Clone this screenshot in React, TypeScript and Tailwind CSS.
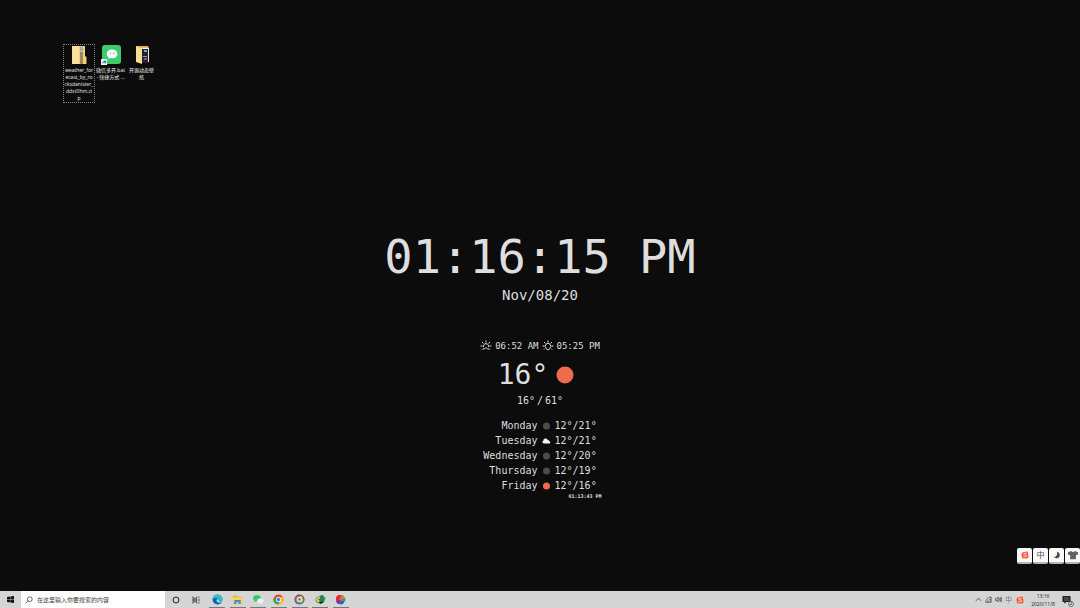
import React from 'react';

type Weather = 'haze' | 'cloud' | 'clear';

type Forecast = {
  day: string;
  weather: Weather;
  range: string;
};

const FORECAST: Forecast[] = [
  { day: 'Monday', weather: 'haze', range: '12°/21°' },
  { day: 'Tuesday', weather: 'cloud', range: '12°/21°' },
  { day: 'Wednesday', weather: 'haze', range: '12°/20°' },
  { day: 'Thursday', weather: 'haze', range: '12°/19°' },
  { day: 'Friday', weather: 'clear', range: '12°/16°' },
];

function WeatherIcon({ weather }: { weather: Weather }) {
  if (weather === 'cloud') {
    return (
      <svg viewBox="0 0 9 9" className="size-[9px]" fill="#f2f2f2" aria-hidden="true">
        <path d="M1.8 7.5A1.4 1.4 0 0 1 1.3 4.8a2.2 2.2 0 0 1 4.2-1 1.9 1.9 0 0 1 1.6 1.2 1.3 1.3 0 0 1 .3 2.5z" />
      </svg>
    );
  }
  return (
    <svg viewBox="0 0 9 9" className="size-[9px]" aria-hidden="true">
      <circle cx="4.5" cy="5" r="3.5" fill={weather === 'clear' ? '#ee6c4d' : '#4b4b4d'} />
    </svg>
  );
}

function SunIcon({ setting }: { setting?: boolean }) {
  return (
    <svg viewBox="0 0 24 24" className="size-3" fill="none" stroke="#dedede" strokeWidth="2" aria-hidden="true">
      {setting ? (
        <>
          <path d="M8.5 16.5a5.5 5.5 0 1 1 7 0" />
          <path d="m8 17 4 3 4-3" />
        </>
      ) : (
        <>
          <path d="M7 14a5.2 5.2 0 1 1 10 0" />
          <path d="M6 18h3l3-3 3 3h3" />
        </>
      )}
      <path d="M12 1v4M4 4l3 3M20 4l-3 3M1 12h4M19 12h4M4 19l2-2M20 19l-2-2" />
    </svg>
  );
}

function ZipIcon() {
  return (
    <svg viewBox="0 0 20 20" className="size-5" aria-hidden="true">
      <path d="M3 1h13v10l1.5 1v7H3z" fill="#f3d277" />
      <path d="M3 1h7v18H3z" fill="#f9dfa0" />
      <path d="M11 1h3v18h-3z" fill="#9c8a5c" />
      <path d="M11.5 1h2v6h-2z" fill="#d9e0e4" />
      <path d="M11.5 3h2M11.5 5h2" stroke="#59686c" strokeWidth=".8" />
    </svg>
  );
}

function WeChatShortcutIcon() {
  return (
    <svg viewBox="0 0 20 20" className="size-5" aria-hidden="true">
      <rect x="1" width="19" height="19" rx="3" fill="#40ca70" />
      <path d="M11 4.5c-3 0-5.3 1.9-5.3 4.4 0 1.4.8 2.6 2 3.4l-.4 1.8 2.1-1c3.8 1 7-1.2 7-4.2 0-2.5-2.3-4.4-5.4-4.4z" fill="#fff" />
      <circle cx="9.3" cy="8.3" r=".7" fill="#40ca70" />
      <circle cx="12.8" cy="8.3" r=".7" fill="#40ca70" />
      <path d="M0 14h6v6H0z" fill="#f3f5f7" />
      <path d="M1.2 19c0-2 1-3 2.5-3v-1.2L5.5 17l-1.8 1.8v-1.2c-1 0-1.8.3-2.5 1.4z" fill="#2569b4" />
    </svg>
  );
}

function FolderIcon() {
  return (
    <svg viewBox="0 0 20 20" className="size-5" aria-hidden="true">
      <path d="M4 1h12l1 2v14H4z" fill="#e3b957" />
      <path d="M8 3h9v14H8z" fill="#ececec" />
      <path d="M10 4h6v14h-6z" fill="#202433" />
      <path d="M12 5h3v2h-3zM11 11h4v1h-4z" fill="#8b9fc4" />
      <path d="M12 13h3v2h-3z" fill="#a94d58" />
      <path d="m4 1 6 3v15l-6-2z" fill="#f9dc91" />
    </svg>
  );
}

function SogouIcon({ className }: { className: string }) {
  return (
    <svg viewBox="0 0 12 12" className={className} aria-hidden="true">
      <path d="M3 1.8 10 .6l1.4 8.6L8.8 11.4 1.6 11 .6 4z" fill="#f45129" />
      <path d="M9 3.7c-2-.9-5.4-.6-5.4.9 0 1.7 5.2.9 5.2 2.7 0 1.6-3.4 1.8-5.6.8" fill="none" stroke="#fff" strokeWidth="1.1" />
    </svg>
  );
}

function MoonIcon() {
  return (
    <svg viewBox="0 0 12 12" className="size-2" fill="#46464b" aria-hidden="true">
      <path d="M5.5 1A5 5 0 1 1 1 8.8C5.2 9.2 7.6 5 5.5 1z" />
    </svg>
  );
}

function ShirtIcon() {
  return (
    <svg viewBox="0 0 12 12" className="size-2.5" fill="#65645b" aria-hidden="true">
      <path d="M3.7 1.2c1.2 1.4 3.4 1.4 4.6 0L12 2.8v3L9.5 6v5h-7V6L0 5.8v-3z" />
    </svg>
  );
}

const DESKTOP_ITEMS = [
  { label: 'weather_forecast_by_rocksdanister_ddxt0hm.zip', lines: ['weather_for', 'ecast_by_ro', 'cksdanister_', 'ddxt0hm.zi', 'p'], icon: <ZipIcon />, selected: true },
  { label: '微信多开.bat - 快捷方式', lines: ['微信多开.bat', '- 快捷方式 ...'], icon: <WeChatShortcutIcon />, selected: false },
  { label: '开源动态壁纸', lines: ['开源动态壁', '纸'], icon: <FolderIcon />, selected: false },
];

const APPS = [
  {
    name: 'Microsoft Edge',
    icon: (
      <svg viewBox="0 0 24 24" className="size-[11px]">
        <circle cx="12" cy="12" r="11" fill="#1687d5" />
        <path d="M1 11C3-1 22-2 23 10c0 4-3 6-8 5 3-5-4-9-10-5-2 1-3 1-4 1z" fill="#2dc5ba" />
        <path d="M3 10c5-3 9 1 7 5-1 4 6 6 11 3-6 7-16 5-18-2-1-2-1-4 0-6z" fill="#1265b6" />
        <path d="M11 12c4-2 4 1 3 3 3 3 7 1 9-2-1 5-6 7-11 4-2-1-2-4-1-5z" fill="#d7e9eb" />
      </svg>
    ),
  },
  {
    name: '文件资源管理器',
    icon: (
      <svg viewBox="0 0 24 24" className="size-[11px]">
        <path d="M2 3h8l3 3h9v15H2z" fill="#efb72f" />
        <path d="M2 8h20v12H2z" fill="#ffd25c" />
        <path d="M5 13h14v9h-4v-4H9v4H5z" fill="#3994d7" />
      </svg>
    ),
  },
  {
    name: '微信',
    icon: (
      <svg viewBox="0 0 24 24" className="size-[11px]">
        <path d="M9 2c-5 0-9 3-9 7 0 2 1 4 3 5l-1 4 4-2c8 1 12-2 12-7 0-4-4-7-9-7z" fill="#38cd6e" />
        <path d="M16 9c-4 0-7 3-7 6s4 6 9 5l3 2-1-3c6-4 2-10-4-10z" fill="#f0f3f0" />
        <circle cx="6" cy="8" r="1" fill="#267b47" />
        <circle cx="12" cy="8" r="1" fill="#267b47" />
      </svg>
    ),
  },
  {
    name: 'Google Chrome',
    icon: (
      <svg viewBox="0 0 24 24" className="size-[11px]">
        <circle cx="12" cy="12" r="11" fill="#e8473c" />
        <path d="M2.5 6.5A11 11 0 0 0 11 23l5-9-8 0z" fill="#30a653" />
        <path d="M12 7h10a11 11 0 0 1-11 16l6-10z" fill="#fbc522" />
        <circle cx="12" cy="12" r="5.5" fill="#fff" />
        <circle cx="12" cy="12" r="4" fill="#3e7fe5" />
      </svg>
    ),
  },
  {
    name: '浏览器',
    icon: (
      <svg viewBox="0 0 24 24" className="size-[11px]">
        <circle cx="12" cy="12" r="11" fill="#4a4a4a" />
        <path d="M12 3a9 9 0 0 1 8 5l-8 4z" fill="#f0c040" />
        <path d="M20 8a9 9 0 0 1-4 12l-4-8z" fill="#81c85b" />
        <path d="M16 20a9 9 0 0 1-12-4l8-4z" fill="#669acb" />
        <path d="M4 16a9 9 0 0 1 8-13v9z" fill="#d76b83" />
        <circle cx="12" cy="12" r="5.5" fill="#eee" />
        <circle cx="12" cy="12" r="2.5" fill="#555" />
      </svg>
    ),
  },
  {
    name: 'Internet Download Manager',
    icon: (
      <svg viewBox="0 0 24 24" className="size-[11px]">
        <ellipse cx="11" cy="13" rx="10" ry="8" fill="#2385bb" />
        <path d="M1 12 9 5l3 4 1 5-6 5z" fill="#e8d23c" />
        <path d="m10 4 8-2 2 6 4-1-7 12L6 12l5-2z" fill="#268745" />
        <path d="M8 17h12l-7 5z" fill="#242826" />
      </svg>
    ),
  },
  {
    name: 'Lively Wallpaper',
    icon: (
      <svg viewBox="0 0 24 24" className="size-[11px]">
        <path d="M12 12 2 14V7l5-5h6z" fill="#e52725" />
        <path d="m12 12 1-10h4l5 6z" fill="#ef702c" />
        <path d="m12 12-10 2 2 6 8 3z" fill="#852a9a" />
        <path d="m12 12 9 5-4 5-5 1z" fill="#2459d5" />
        <path d="m12 12 10-4 1 5-2 4z" fill="#25aa4c" />
      </svg>
    ),
  },
];

function Taskbar() {
  return (
    <footer className="flex h-[17px] shrink-0 items-stretch bg-[#d5d5d5] text-[#222]">
      <button type="button" aria-label="开始" className="flex w-[21px] items-center justify-center">
        <svg viewBox="0 0 8 8" className="size-[7px]" fill="#111">
          <path d="m0 1.1 3.6-.5v3.1H0zM4 .5 8 0v3.7H4zM0 4.2h3.6v3.1L0 6.8zM4 4.2h4V8l-4-.6z" />
        </svg>
      </button>
      <label className="flex w-36 items-center gap-1 bg-white pl-1">
        <svg viewBox="0 0 10 10" className="size-2 shrink-0" fill="none" stroke="#444">
          <circle cx="6" cy="4" r="3" />
          <path d="M4 6 .8 9.2" />
        </svg>
        <input
          type="search"
          aria-label="搜索"
          placeholder="在这里输入你要搜索的内容"
          className="min-w-0 flex-1 text-[6px] leading-4 outline-none placeholder:text-[#444]"
        />
      </label>
      <button type="button" aria-label="Cortana" className="flex w-[21px] items-center justify-center">
        <svg viewBox="0 0 8 8" className="size-2" fill="none" stroke="#222">
          <circle cx="4" cy="4" r="3" />
        </svg>
      </button>
      <button type="button" aria-label="任务视图" className="flex w-5 items-center justify-center">
        <svg viewBox="0 0 8 8" className="size-2" fill="none" stroke="#333" strokeWidth=".8">
          <path d="M.8.5v1.7h4V.5M.8 7.5V5.8h4v1.7M.8 3.2h4v1.6h-4zM7 .5v1.7M7 3v2M7 5.8v1.7" />
        </svg>
      </button>
      <nav aria-label="任务栏" className="ml-[3px] flex w-[140px] justify-between">
        {APPS.map((app) => (
          <button
            key={app.name}
            type="button"
            aria-label={app.name}
            className="flex w-4 items-center justify-center border-b border-[#777]"
          >
            {app.icon}
          </button>
        ))}
      </nav>

      <div className="ml-auto flex items-center gap-[3px] pr-2">
        <button type="button" aria-label="显示隐藏的图标">
          <svg viewBox="0 0 8 8" className="size-[7px]" fill="none" stroke="#333" strokeWidth=".9">
            <path d="m1 5.5 3-3 3 3" />
          </svg>
        </button>
        <button type="button" aria-label="网络">
          <svg viewBox="0 0 8 8" className="size-[7px]" fill="none" stroke="#444" strokeWidth=".8">
            <path d="M.8 7.2C1 4 3 1.5 7 1v6.2zM3 7c.2-1.8 1.5-3 4-3.4M5 7c.2-.7.8-1.1 2-1.3" />
          </svg>
        </button>
        <button type="button" aria-label="音量">
          <svg viewBox="0 0 8 8" className="size-[7px]" fill="none" stroke="#333" strokeWidth=".8">
            <path d="M.4 3h1.2l2-1.7v5.4L1.6 5H.4zM4.7 2.8q.8 1.2 0 2.4M5.7 1.8q1.6 2.2 0 4.4M6.8 1q2 3 0 6" />
          </svg>
        </button>
        <button type="button" className="text-[7px] leading-3 text-[#777]">
          中
        </button>
        <button type="button" aria-label="搜狗输入法" className="ml-px">
          <SogouIcon className="size-2" />
        </button>
        <button type="button" className="ml-[3px] w-[26px] text-center text-[5px] leading-2">
          <span className="block">13:16</span>
          <span className="block">2020/11/8</span>
        </button>
        <button type="button" aria-label="通知" className="relative ml-[3px]">
          <svg viewBox="0 0 10 10" className="size-2.5" fill="#222">
            <path d="M.5 1h8v6H4.3L2.5 9V7h-2z" />
            <path d="M2 3h5M2 5h5" stroke="#aaa" strokeWidth=".6" />
          </svg>
          <span className="absolute -right-0.5 -bottom-0.5 flex size-1.5 items-center justify-center rounded-full border border-[#777] bg-[#ddd] text-[5px] leading-none">
            2
          </span>
        </button>
      </div>
    </footer>
  );
}

export default function App() {
  return (
    <div className="relative flex min-h-screen flex-col bg-[#0c0c0c] font-['Open_Sans','Noto_Sans_CJK_SC',sans-serif]">
      <div className="flex items-start px-[63px] pt-11">
        {DESKTOP_ITEMS.map((item) => (
          <button
            key={item.label}
            type="button"
            aria-label={item.label}
            className={
              item.selected
                ? 'flex w-8 flex-col items-center border border-dotted border-[#858585]'
                : 'flex w-[31px] flex-col items-center border border-transparent'
            }
          >
            {item.icon}
            <span className="mt-0.5 text-center text-[5px] leading-[7px] whitespace-nowrap text-[#eee]">
              {item.lines.map((line) => (
                <span key={line} className="block">
                  {line}
                </span>
              ))}
            </span>
          </button>
        ))}
      </div>

      <main className="mt-32 flex flex-1 flex-col items-center font-['DejaVu_Sans_Mono',monospace] text-[#dedede]">
        <h1 className="text-[47px] leading-[52px]">01:16:15 PM</h1>
        <p className="mt-0.5 text-[14px] leading-5">Nov/08/20</p>

        <div className="mt-8 flex items-center gap-[3px] text-[9px] leading-[18px]">
          <SunIcon />
          <span>06:52 AM</span>
          <SunIcon setting />
          <span>05:25 PM</span>
        </div>

        <div className="mt-0.5 flex items-center gap-2 pr-2 text-[28px] leading-9">
          <span>16°</span>
          <svg viewBox="0 0 18 18" className="size-[18px]" aria-hidden="true">
            <circle cx="9" cy="9" r="8.5" fill="#ee6c4d" />
          </svg>
        </div>
        <p className="flex gap-0.5 text-[10px] leading-[15px]">
          <span>16°</span>
          <span>/</span>
          <span>61°</span>
        </p>

        <table className="mt-2.5 text-[10px] leading-[15px]">
          <tbody>
            {FORECAST.map(({ day, weather, range }) => (
              <tr key={day}>
                <th scope="row" className="p-0 text-right font-normal">
                  {day}
                </th>
                <td className="px-1">
                  <WeatherIcon weather={weather} />
                </td>
                <td className="p-0">{range}</td>
              </tr>
            ))}
          </tbody>
        </table>
        <p className="pl-[90px] text-[5px] leading-[7px] font-bold">01:13:43 PM</p>
      </main>

      <div className="absolute right-0 bottom-11 flex gap-px">
        <button type="button" aria-label="搜狗输入法" className="flex h-4 w-[15px] items-center justify-center rounded-xs border-b-2 border-[#b5b5b5] bg-[#fafafa]">
          <SogouIcon className="size-2" />
        </button>
        <button type="button" className="flex h-4 w-[15px] items-center justify-center rounded-xs border-b-2 border-[#b5b5b5] bg-[#fafafa] text-[8px] leading-none text-[#46464b]">
          中
        </button>
        <button type="button" aria-label="半角" className="flex h-4 w-[15px] items-center justify-center rounded-xs border-b-2 border-[#b5b5b5] bg-[#fafafa]">
          <MoonIcon />
        </button>
        <button type="button" aria-label="皮肤" className="flex h-4 w-[15px] items-center justify-center rounded-xs border-b-2 border-[#b5b5b5] bg-[#fafafa]">
          <ShirtIcon />
        </button>
      </div>

      <Taskbar />
    </div>
  );
}
